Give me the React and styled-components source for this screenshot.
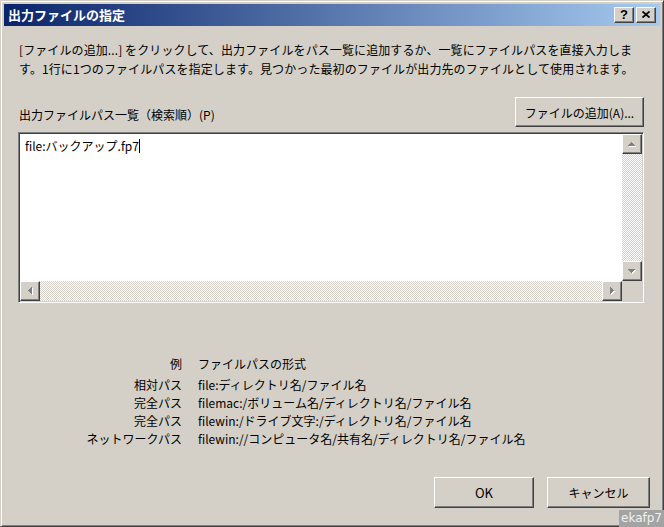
import { Fragment } from 'react';
import styled, { createGlobalStyle, css } from 'styled-components';

const GlobalStyle = createGlobalStyle`
  html, body {
    margin: 0;
    padding: 0;
    overflow: hidden;
    background: #d4d0c8;
  }
`;

const raised = css`
  box-sizing: border-box;
  border: 1px solid;
  border-color: #ffffff #404040 #404040 #ffffff;
  box-shadow: inset -1px -1px #808080;
  background: #d4d0c8;
`;

const Window = styled.div`
  position: relative;
  width: 664px;
  height: 527px;
  box-sizing: border-box;
  background: #d4d0c8;
  border: 1px solid;
  border-color: #d4d0c8 #404040 #404040 #d4d0c8;
  box-shadow: inset 1px 1px #ffffff, inset -1px -1px #808080;
  padding: 3px;
  display: flex;
  flex-direction: column;
  font-family: "Noto Sans CJK JP", "Liberation Sans", sans-serif;
  font-size: 12px;
  color: #000;
`;

const TitleBar = styled.div`
  height: 22px;
  flex-shrink: 0;
  display: flex;
  align-items: center;
  padding: 0 4px 0 4px;
  background: linear-gradient(to right, #0a246a, #a6caf0);
`;

const Title = styled.div`
  flex: 1;
  color: #ffffff;
  font-size: 13px;
  font-weight: bold;
  line-height: 22px;
  white-space: nowrap;
`;

const CaptionButtons = styled.div`
  display: flex;
  gap: 2px;
`;

const CaptionButton = styled.div`
  ${raised};
  width: 20px;
  height: 16px;
  display: flex;
  align-items: center;
  justify-content: center;
  font-family: "Liberation Sans", sans-serif;
  font-weight: bold;
  font-size: 13px;
  line-height: 1;
  padding-bottom: 1px;
`;

const Body = styled.div`
  flex: 1;
  display: flex;
  flex-direction: column;
  padding: 0 16px 0 14px;
`;

const Description = styled.div`
  margin-top: 14px;
  padding-left: 1px;
  line-height: 19px;
  letter-spacing: 0.1px;
  white-space: nowrap;
`;

const LabelRow = styled.div`
  margin-top: 19px;
  height: 30px;
  display: flex;
  align-items: flex-end;
  justify-content: space-between;
`;

const Label = styled.div`
  padding-left: 1px;
  line-height: 18px;
  margin-bottom: 3px;
`;

const PushButton = styled.div`
  ${raised};
  width: ${(p) => p.$w}px;
  height: ${(p) => p.$h}px;
  display: flex;
  align-items: center;
  justify-content: center;
  font-size: ${(p) => p.$size || 12}px;
  white-space: nowrap;
`;

const ListBox = styled.div`
  margin-top: 5px;
  height: 171px;
  box-sizing: border-box;
  border: 1px solid;
  border-color: #808080 #ffffff #ffffff #808080;
  box-shadow: inset 1px 1px #404040, inset -1px -1px #d4d0c8;
  padding: 1px;
  background: #ffffff;
  display: grid;
  grid-template-columns: 1fr 20px;
  grid-template-rows: 1fr 20px;
`;

const EditArea = styled.div`
  padding: 4px 5px;
  line-height: 16px;
`;

const Caret = styled.span`
  display: inline-block;
  width: 1px;
  height: 14px;
  background: #000;
  vertical-align: -2px;
`;

const Track = styled.div`
  display: flex;
  flex-direction: ${(p) => (p.$vertical ? 'column' : 'row')};
  justify-content: space-between;
  background-color: #ffffff;
  background-image: conic-gradient(#d4d0c8 25%, #ffffff 0 50%, #d4d0c8 0 75%, #ffffff 0);
  background-size: 2px 2px;
`;

const ScrollButton = styled.div`
  ${raised};
  width: 20px;
  height: 20px;
  display: flex;
  align-items: center;
  justify-content: center;
`;

const Corner = styled.div`
  background: #d4d0c8;
`;

const Examples = styled.div`
  margin-top: 52px;
  display: grid;
  grid-template-columns: 164px auto;
  column-gap: 16px;
  white-space: nowrap;
`;

const Cell = styled.div`
  text-align: ${(p) => (p.$right ? 'right' : 'left')};
  line-height: ${(p) => (p.$head ? '17px' : '18px')};
  padding-bottom: ${(p) => (p.$head ? '4px' : '0')};
`;

const Footer = styled.div`
  margin-top: 29px;
  margin-right: -6px;
  display: flex;
  justify-content: flex-end;
  gap: 13px;
`;

const Watermark = styled.div`
  position: absolute;
  right: -1px;
  bottom: -1px;
  width: 45px;
  height: 17px;
  background: #a3a3a3;
  color: #f2f2f2;
  font-family: "DejaVu Sans", sans-serif;
  font-size: 12px;
  line-height: 17px;
  text-align: center;
`;

const arrowPaths = {
  up: '3.5,0 7,4 0,4',
  down: '0,0 7,0 3.5,4',
  left: '4,0 4,7 0,3.5',
  right: '0,0 0,7 4,3.5',
};

const Arrow = ({ dir }) => {
  const wide = dir === 'up' || dir === 'down';
  const w = wide ? 8 : 5;
  const h = wide ? 5 : 8;
  return (
    <svg width={w} height={h} viewBox={`0 0 ${w} ${h}`} shapeRendering="crispEdges">
      <polygon points={arrowPaths[dir]} fill="#ffffff" transform="translate(1 1)" />
      <polygon points={arrowPaths[dir]} fill="#808080" />
    </svg>
  );
};

const CloseGlyph = () => (
  <svg width="8" height="7" viewBox="0 0 8 7">
    <path d="M0.5 0.5 L7.5 6.5 M7.5 0.5 L0.5 6.5" stroke="#000" strokeWidth="1.8" />
  </svg>
);

const examples = [
  ['相対パス', 'file:ディレクトリ名/ファイル名'],
  ['完全パス', 'filemac:/ボリューム名/ディレクトリ名/ファイル名'],
  ['完全パス', 'filewin:/ドライブ文字:/ディレクトリ名/ファイル名'],
  ['ネットワークパス', 'filewin://コンピュータ名/共有名/ディレクトリ名/ファイル名'],
];

export default function App() {
  return (
    <>
      <GlobalStyle />
      <Window>
        <TitleBar>
          <Title>出力ファイルの指定</Title>
          <CaptionButtons>
            <CaptionButton>?</CaptionButton>
            <CaptionButton>
              <CloseGlyph />
            </CaptionButton>
          </CaptionButtons>
        </TitleBar>

        <Body>
          <Description>
            <div>[ファイルの追加...] をクリックして、出力ファイルをパス一覧に追加するか、一覧にファイルパスを直接入力しま</div>
            <div>す。1行に1つのファイルパスを指定します。見つかった最初のファイルが出力先のファイルとして使用されます。</div>
          </Description>

          <LabelRow>
            <Label>出力ファイルパス一覧（検索順）(P)</Label>
            <PushButton $w={129} $h={30}>ファイルの追加(A)...</PushButton>
          </LabelRow>

          <ListBox>
            <EditArea>
              file:バックアップ.fp7<Caret />
            </EditArea>
            <Track $vertical>
              <ScrollButton><Arrow dir="up" /></ScrollButton>
              <ScrollButton><Arrow dir="down" /></ScrollButton>
            </Track>
            <Track>
              <ScrollButton><Arrow dir="left" /></ScrollButton>
              <ScrollButton><Arrow dir="right" /></ScrollButton>
            </Track>
            <Corner />
          </ListBox>

          <Examples>
            <Cell $right $head>例</Cell>
            <Cell $head>ファイルパスの形式</Cell>
            {examples.map(([kind, path], i) => (
              <Fragment key={i}>
                <Cell $right>{kind}</Cell>
                <Cell>{path}</Cell>
              </Fragment>
            ))}
          </Examples>

          <Footer>
            <PushButton $w={100} $h={31} $size={13}>OK</PushButton>
            <PushButton $w={103} $h={31}>キャンセル</PushButton>
          </Footer>
        </Body>

        <Watermark>ekafp7</Watermark>
      </Window>
    </>
  );
}
